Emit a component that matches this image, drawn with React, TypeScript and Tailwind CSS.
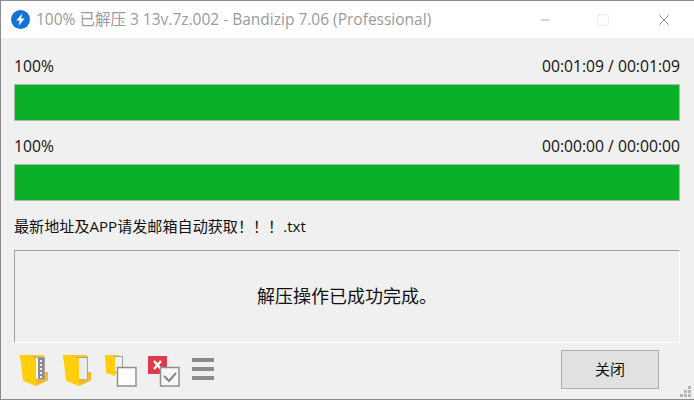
import { Minus, Square, X } from "lucide-react";

const font = "font-['Open_Sans','Noto_Sans_CJK_SC',sans-serif]";

function ZipFolderIcon() {
  return (
    <svg width="29" height="32" viewBox="0 0 29 32">
      <path d="M0 0h24v4H0z" fill="#ffc81e" />
      <rect x="14.5" y="2.5" width="10" height="22" fill="#f4f4f4" stroke="#a3a3a3" />
      <rect x="18" y="3" width="6" height="21" fill="#8c8c8c" />
      <path d="M20 5h2v2h-2zM20 9h2v2h-2zM20 13h2v2h-2zM20 17h2v2h-2zM20 21h2v2h-2z" fill="#efefef" />
      <path d="M25 17h3v8.5L16 31v-6.5h9z" fill="#f7b928" />
      <path d="M0 0l16 4v27L3 26z" fill="#ffcf0d" />
    </svg>
  );
}

function OpenFolderIcon() {
  return (
    <svg width="29" height="32" viewBox="0 0 29 32">
      <path d="M0 0h24v4H0z" fill="#ffc81e" />
      <rect x="14.5" y="2.5" width="10" height="22" fill="#ececec" stroke="#a3a3a3" />
      <path d="M25 17h3v8.5L16 31v-6.5h9z" fill="#f7b928" />
      <path d="M0 0l16 4v27L3 26z" fill="#ffcf0d" />
    </svg>
  );
}

function CopyFolderIcon() {
  return (
    <svg width="32" height="32" viewBox="0 0 32 32">
      <path d="M0 0h14v4H0z" fill="#ffc81e" />
      <rect x="9.5" y="1.5" width="8" height="16" fill="#f1f1f1" stroke="#a3a3a3" />
      <path d="M0 0l10 3v18L1 18z" fill="#ffcf0d" />
      <rect x="12.5" y="12.5" width="18.5" height="18.5" fill="#fdfdfd" stroke="#8f8f8f" strokeWidth="1.5" />
    </svg>
  );
}

function CheckIcon() {
  return (
    <svg width="33" height="32" viewBox="0 0 33 32">
      <rect x="0" y="0" width="19" height="18" fill="#dd3b4b" />
      <path d="M6 5l7 8M13 5l-7 8" stroke="#fff" strokeWidth="2.4" />
      <rect x="12.5" y="11.5" width="18.5" height="18.5" fill="#f7f7f7" stroke="#8f8f8f" strokeWidth="1.5" />
      <path d="M16 20l5 5 7-8" fill="none" stroke="#858585" strokeWidth="2" />
    </svg>
  );
}

function Progress({ time }: { time: string }) {
  return (
    <div className="flex flex-col">
      <div className="flex justify-between h-[19px] items-center text-[15.7px] leading-[19px] text-[#111]">
        <span>100%</span>
        <span>{time}</span>
      </div>
      <div className="mt-[8px] h-[37px] bg-[#0ab028] border border-[#a9bcab]"></div>
    </div>
  );
}

export default function App() {
  return (
    <div className={`relative w-[694px] h-[400px] flex flex-col bg-[#f0f0f0] border-t border-l border-b border-[#8c8c8c] overflow-hidden ${font}`}>
      <div className="h-[37px] shrink-0 bg-white flex items-center pl-[10px]">
        <svg width="19" height="19" viewBox="0 0 18 18">
          <circle cx="9" cy="9" r="9" fill="#1272d6" />
          <path d="M10.8 3L5 10h3.2l-1 5 5.8-7H9.6z" fill="#fff" />
        </svg>
        <span className="ml-[6px] text-[15.5px] text-[#9b9b9b] whitespace-nowrap">100% 已解压 3 13v.7z.002 - Bandizip 7.06 (Professional)</span>
        <div className="ml-auto flex items-center text-[#7f7f7f]">
          <Minus size={14} strokeWidth={1.1} className="mr-[44px]" />
          <Square size={14} strokeWidth={0.9} className="mr-[45px] text-[#d8d8d8]" />
          <X size={18} strokeWidth={1.1} className="mr-[21px]" />
        </div>
      </div>
      <div className="flex-1 flex flex-col pl-[13px] pr-[14px] pt-[19px]">
        <div className="flex flex-col gap-[16px]">
          <Progress time="00:01:09 / 00:01:09" />
          <Progress time="00:00:00 / 00:00:00" />
        </div>
        <div className="mt-[15px] h-[20px] flex items-center text-[15.1px] text-[#111] whitespace-nowrap">最新地址及APP请发邮箱自动获取！！！.txt</div>
        <div className="mt-[14px] h-[93px] shrink-0 flex items-center justify-center border-t border-l border-[#a0a0a0] border-r-white border-b-white border-r border-b text-[18px] text-[#111]">
          解压操作已成功完成。
        </div>
        <div className="mt-[7px] flex items-start">
          <div className="flex items-start mt-[5px]">
            <div className="ml-[6px]"><ZipFolderIcon /></div>
            <div className="ml-[14px]"><OpenFolderIcon /></div>
            <div className="ml-[13px]"><CopyFolderIcon /></div>
            <div className="ml-[11px] mt-[1px]"><CheckIcon /></div>
            <div className="ml-[11px] mt-[3px] flex flex-col gap-[5px]">
              <div className="w-[22px] h-[4px] bg-[#8c8c8c]"></div>
              <div className="w-[22px] h-[4px] bg-[#8c8c8c]"></div>
              <div className="w-[22px] h-[4px] bg-[#8c8c8c]"></div>
            </div>
          </div>
          <button className={`ml-auto mr-[21px] w-[98px] h-[39px] bg-[#e1e1e1] border border-[#adadad] text-[15px] text-[#111] ${font}`}>关闭</button>
        </div>
      </div>
      <svg className="absolute right-[2px] bottom-[1px]" width="12" height="12" viewBox="0 0 12 12" fill="#b4b4b4">
        <path d="M8 0h3v3H8zM4 4h3v3H4zM8 4h3v3H8zM0 8h3v3H0zM4 8h3v3H4zM8 8h3v3H8z" />
      </svg>
    </div>
  );
}
